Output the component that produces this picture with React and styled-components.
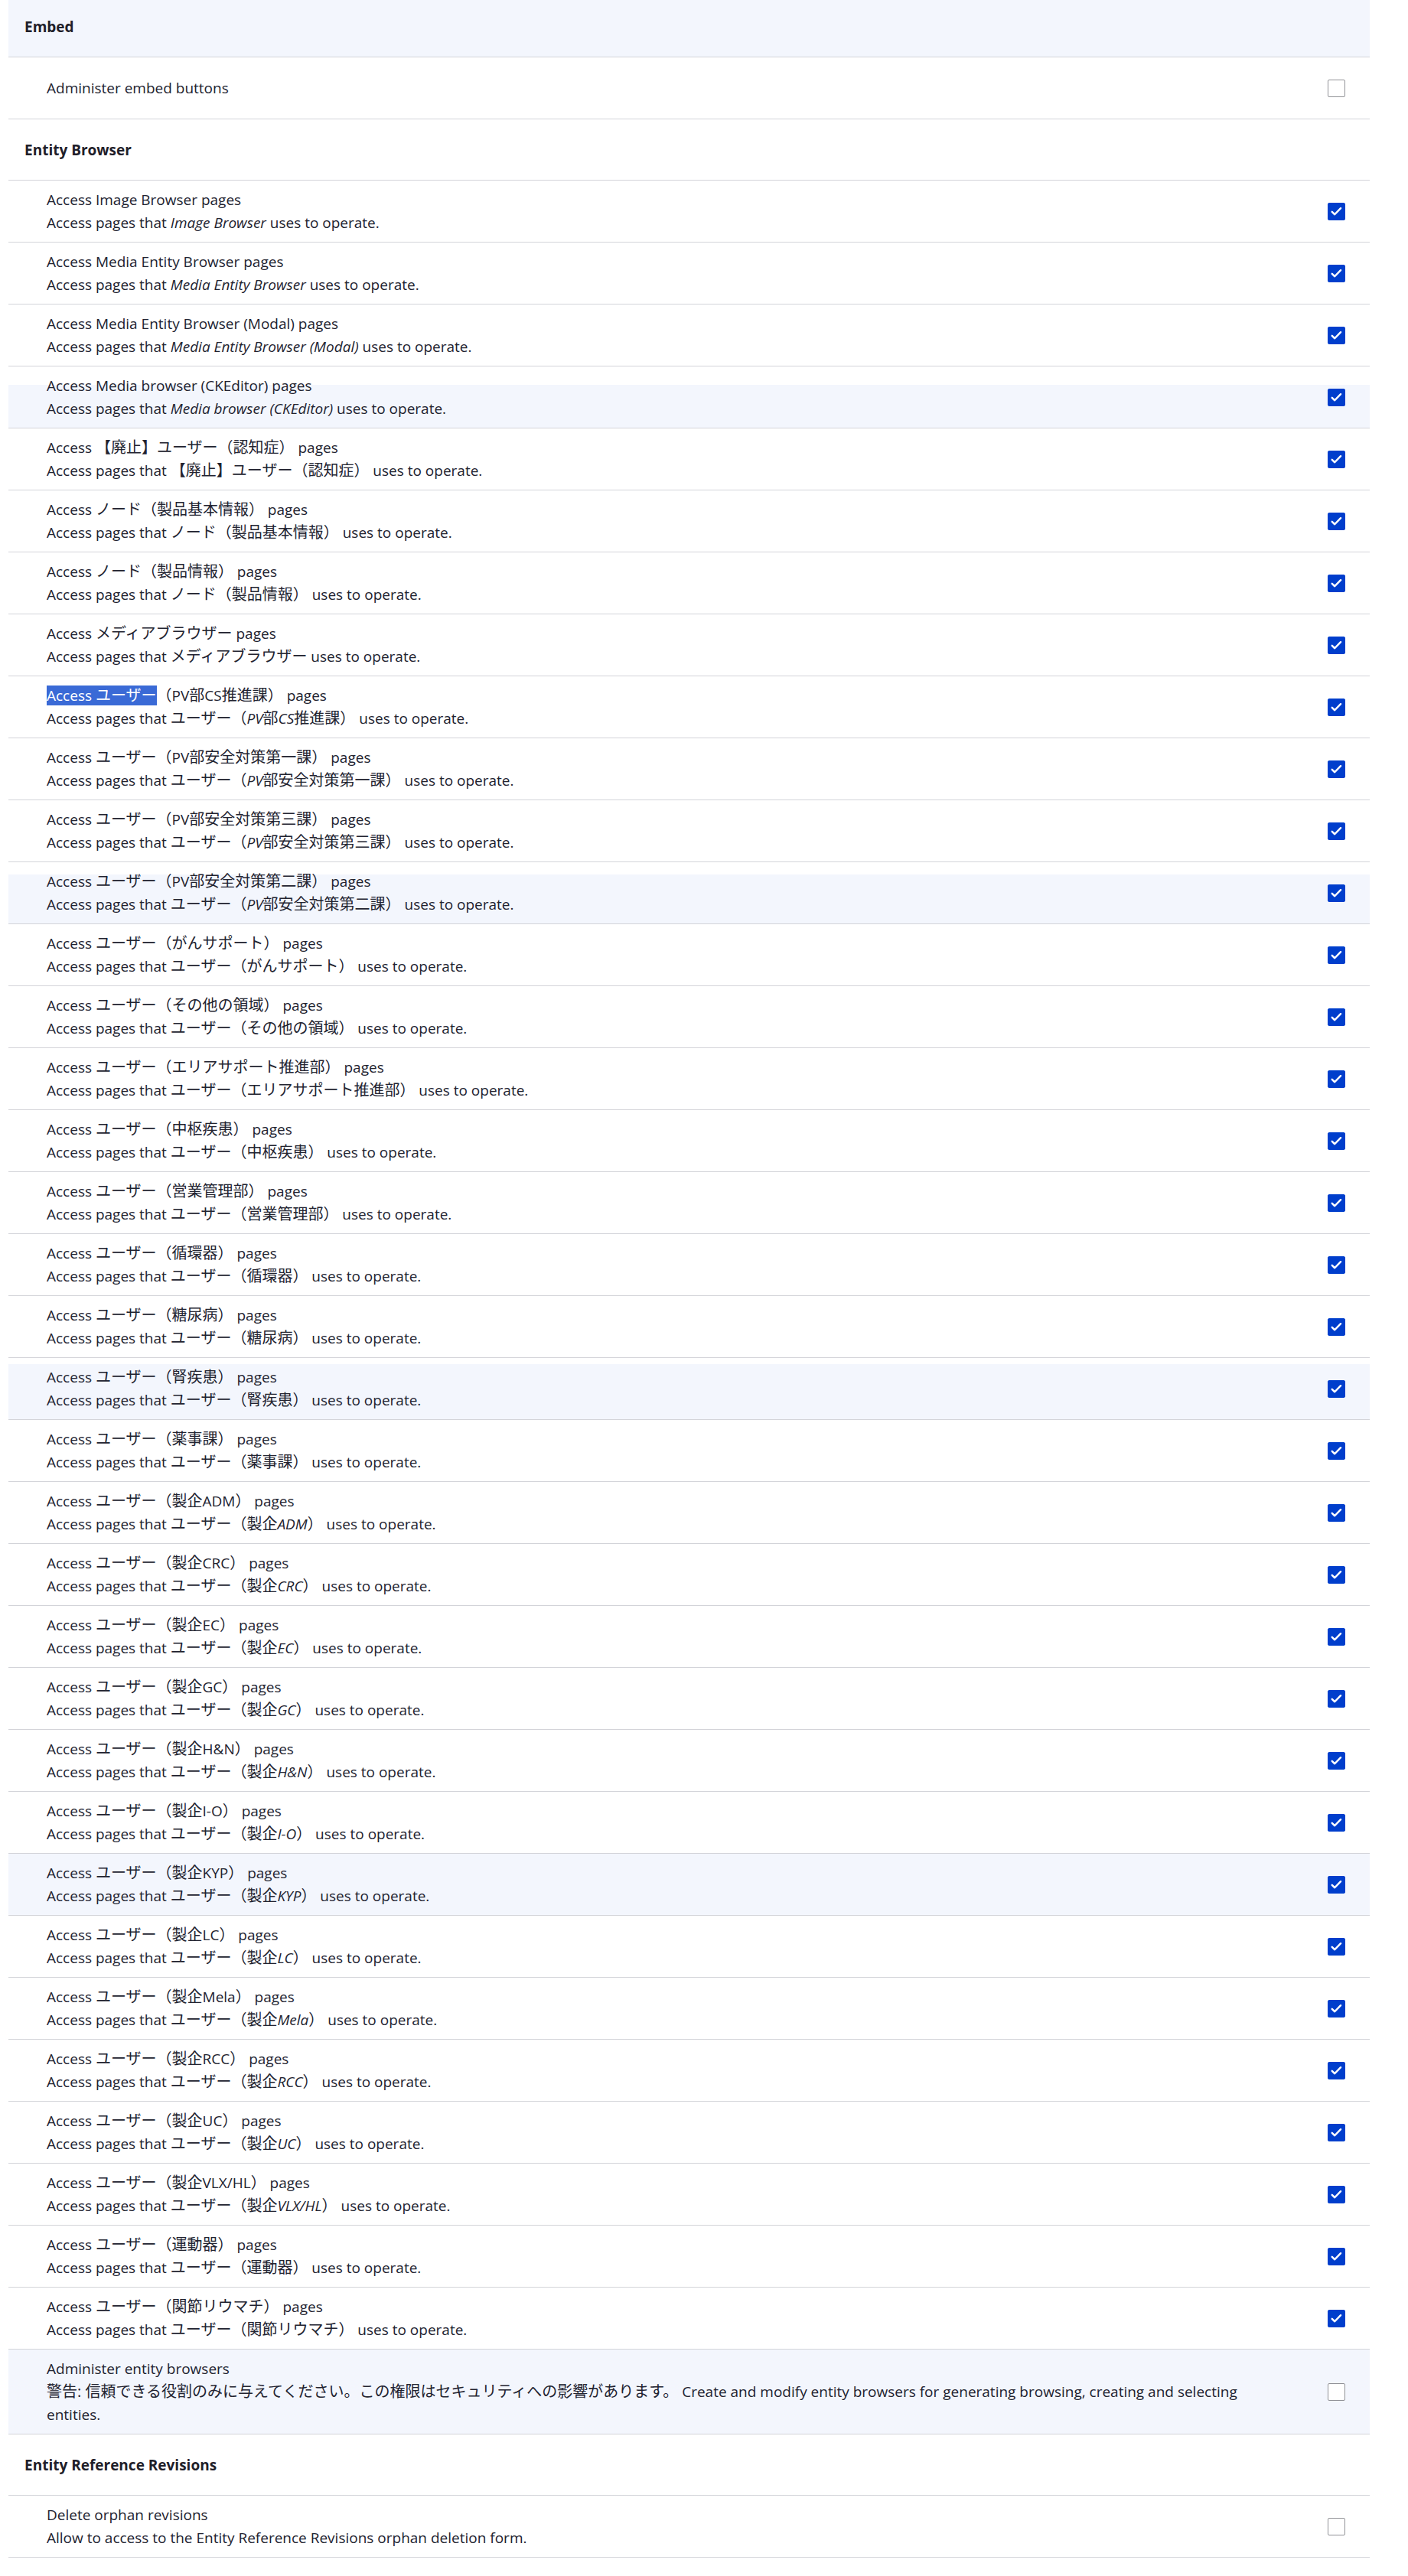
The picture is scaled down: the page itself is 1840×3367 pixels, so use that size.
import React from 'react';
import styled, { createGlobalStyle, css } from 'styled-components';

const GlobalStyle = createGlobalStyle`
  html, body {
    margin: 0;
    padding: 0;
    background: #ffffff;
  }
  body {
    font-family: "Open Sans", "Noto Sans CJK JP", sans-serif;
    color: #222330;
    -webkit-font-smoothing: antialiased;
  }
`;

const Page = styled.div`
  width: 1779px;
  margin: -5px 0 0 11px;
`;

const PermissionTable = styled.div`
  display: flex;
  flex-direction: column;
`;

const SectionHeader = styled.div`
  display: flex;
  align-items: center;
  box-sizing: border-box;
  height: 80px;
  padding: 0 21px;
  border-bottom: 1px solid #d3d4d9;
  background: ${(p) => (p.$shaded ? '#f3f6fd' : '#ffffff')};
  font-size: 19px;
  font-weight: 700;
  line-height: 30px;
  color: #1f2029;
`;

const PermissionRow = styled.div`
  display: flex;
  align-items: center;
  box-sizing: border-box;
  min-height: 81px;
  border-bottom: 1px solid #d3d4d9;
  background: #ffffff;
  ${(p) =>
    p.$band != null &&
    css`
      background: linear-gradient(
        to bottom,
        #ffffff ${p.$band}px,
        #f3f6fd ${p.$band}px
      );
    `}
`;

const PermissionText = styled.div`
  flex: 1;
  min-width: 0;
  padding: 10px 40px 10px 50px;
  font-size: 19px;
  line-height: 30px;
`;

const Title = styled.div``;

const Description = styled.div``;

const Em = styled.em`
  font-style: italic;
`;

// Japanese runs are set a touch larger than the Latin text around them.
const Cjk = styled.span`
  font-size: 20px;
  font-style: normal;
`;

const Selected = styled.span`
  background: #3a6ad6;
  color: #ffffff;
`;

const CheckCell = styled.div`
  flex: 0 0 88px;
  display: flex;
  justify-content: center;
  align-items: center;
`;

const Box = styled.span`
  box-sizing: border-box;
  width: 23px;
  height: 23px;
  border-radius: 2px;
  display: inline-flex;
  align-items: center;
  justify-content: center;
  border: 1px solid ${(p) => (p.$checked ? '#003ecc' : '#919297')};
  background: ${(p) => (p.$checked ? '#003ecc' : '#ffffff')};
`;

function Checkbox({ checked }) {
  return (
    <Box role="checkbox" aria-checked={checked} $checked={checked}>
      {checked && (
        <svg width="23" height="23" viewBox="0 0 23 23" aria-hidden="true">
          <path
            d="M5.2 11.9 L9 15.6 L17.6 6.8"
            fill="none"
            stroke="#ffffff"
            strokeWidth="2.7"
            strokeLinecap="round"
            strokeLinejoin="round"
          />
        </svg>
      )}
    </Box>
  );
}

// Splits a label into Latin and Japanese runs; Latin runs may be italic,
// Japanese runs always stay upright.
function Mixed({ text, slant = false }) {
  const parts = text.split(/([\x20-\x7E]+)/).filter(Boolean);
  return parts.map((part, i) => {
    if (/^[\x20-\x7E]+$/.test(part)) {
      return slant ? <Em key={i}>{part}</Em> : <React.Fragment key={i}>{part}</React.Fragment>;
    }
    return <Cjk key={i}>{part}</Cjk>;
  });
}

const browsers = [
  { name: 'Image Browser' },
  { name: 'Media Entity Browser' },
  { name: 'Media Entity Browser (Modal)' },
  { name: 'Media browser (CKEditor)', band: 24 },
  { name: '【廃止】ユーザー（認知症）' },
  { name: 'ノード（製品基本情報）' },
  { name: 'ノード（製品情報）' },
  { name: 'メディアブラウザー' },
  { name: 'ユーザー（PV部CS推進課）', selected: 'ユーザー' },
  { name: 'ユーザー（PV部安全対策第一課）' },
  { name: 'ユーザー（PV部安全対策第三課）' },
  { name: 'ユーザー（PV部安全対策第二課）', band: 16 },
  { name: 'ユーザー（がんサポート）' },
  { name: 'ユーザー（その他の領域）' },
  { name: 'ユーザー（エリアサポート推進部）' },
  { name: 'ユーザー（中枢疾患）' },
  { name: 'ユーザー（営業管理部）' },
  { name: 'ユーザー（循環器）' },
  { name: 'ユーザー（糖尿病）' },
  { name: 'ユーザー（腎疾患）', band: 8 },
  { name: 'ユーザー（薬事課）' },
  { name: 'ユーザー（製企ADM）' },
  { name: 'ユーザー（製企CRC）' },
  { name: 'ユーザー（製企EC）' },
  { name: 'ユーザー（製企GC）' },
  { name: 'ユーザー（製企H&N）' },
  { name: 'ユーザー（製企I-O）' },
  { name: 'ユーザー（製企KYP）', band: 0 },
  { name: 'ユーザー（製企LC）' },
  { name: 'ユーザー（製企Mela）' },
  { name: 'ユーザー（製企RCC）' },
  { name: 'ユーザー（製企UC）' },
  { name: 'ユーザー（製企VLX/HL）' },
  { name: 'ユーザー（運動器）' },
  { name: 'ユーザー（関節リウマチ）' },
];

function BrowserTitle({ name, selected }) {
  if (selected) {
    const rest = name.slice(selected.length);
    return (
      <Title>
        <Selected>
          Access <Mixed text={selected} />
        </Selected>
        <Mixed text={rest} /> pages
      </Title>
    );
  }
  return (
    <Title>
      Access <Mixed text={name} /> pages
    </Title>
  );
}

export default function App() {
  return (
    <>
      <GlobalStyle />
      <Page>
        <PermissionTable role="table">
          <SectionHeader $shaded>Embed</SectionHeader>
          <PermissionRow>
            <PermissionText>
              <Title>Administer embed buttons</Title>
            </PermissionText>
            <CheckCell>
              <Checkbox checked={false} />
            </CheckCell>
          </PermissionRow>

          <SectionHeader>Entity Browser</SectionHeader>
          {browsers.map((b) => (
            <PermissionRow key={b.name} $band={b.band}>
              <PermissionText>
                <BrowserTitle name={b.name} selected={b.selected} />
                <Description>
                  Access pages that <Mixed text={b.name} slant /> uses to operate.
                </Description>
              </PermissionText>
              <CheckCell>
                <Checkbox checked />
              </CheckCell>
            </PermissionRow>
          ))}
          <PermissionRow $band={0}>
            <PermissionText>
              <Title>Administer entity browsers</Title>
              <Description>
                <Cjk>警告: 信頼できる役割のみに与えてください。この権限はセキュリティへの影響があります。</Cjk>{' '}
                Create and modify entity browsers for generating browsing, creating and selecting entities.
              </Description>
            </PermissionText>
            <CheckCell>
              <Checkbox checked={false} />
            </CheckCell>
          </PermissionRow>

          <SectionHeader>Entity Reference Revisions</SectionHeader>
          <PermissionRow>
            <PermissionText>
              <Title>Delete orphan revisions</Title>
              <Description>
                Allow to access to the Entity Reference Revisions orphan deletion form.
              </Description>
            </PermissionText>
            <CheckCell>
              <Checkbox checked={false} />
            </CheckCell>
          </PermissionRow>
        </PermissionTable>
      </Page>
    </>
  );
}
